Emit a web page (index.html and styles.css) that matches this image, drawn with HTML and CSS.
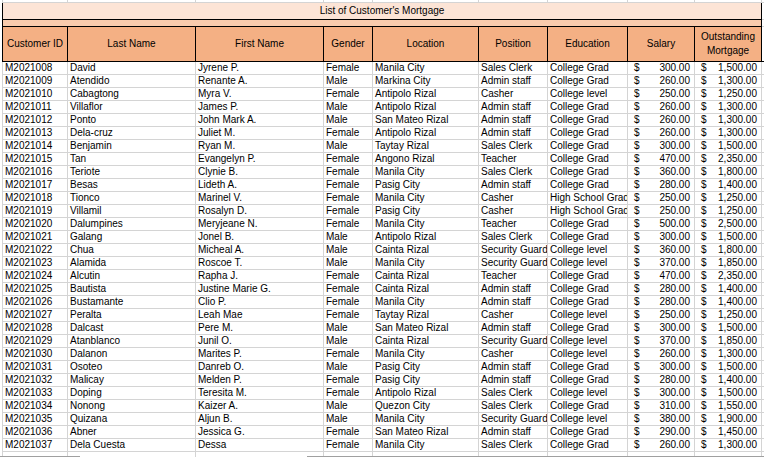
FILE: index.html
```html
<!DOCTYPE html>
<html>
<head>
<meta charset="utf-8">
<link rel="stylesheet" href="styles.css">
</head>
<body>
<div class="sheet">
  <div class="row top"><div class="c"></div><div class="c"></div><div class="c"></div><div class="c"></div><div class="c"></div><div class="c"></div><div class="c"></div><div class="c"></div><div class="c"></div><div class="c"></div></div>
  <div class="row title"><div class="c merged">List of Customer's Mortgage</div><div class="c"></div></div>
  <div class="row band"><div class="c merged"></div><div class="c"></div></div>
  <div class="row head">
    <div class="c">Customer ID</div><div class="c">Last Name</div><div class="c">First Name</div><div class="c">Gender</div><div class="c">Location</div><div class="c">Position</div><div class="c">Education</div><div class="c">Salary</div><div class="c">Outstanding Mortgage</div><div class="c x"></div>
  </div>
  <div class="row"><div class="c">M2021008</div><div class="c">David</div><div class="c">Jyrene P.</div><div class="c">Female</div><div class="c">Manila City</div><div class="c">Sales Clerk</div><div class="c">College Grad</div><div class="c m"><span>$</span><span>300.00</span></div><div class="c m"><span>$</span><span>1,500.00</span></div><div class="c"></div></div>
  <div class="row"><div class="c">M2021009</div><div class="c">Atendido</div><div class="c">Renante A.</div><div class="c">Male</div><div class="c">Markina City</div><div class="c">Admin staff</div><div class="c">College Grad</div><div class="c m"><span>$</span><span>260.00</span></div><div class="c m"><span>$</span><span>1,300.00</span></div><div class="c"></div></div>
  <div class="row"><div class="c">M2021010</div><div class="c">Cabagtong</div><div class="c">Myra V.</div><div class="c">Female</div><div class="c">Antipolo Rizal</div><div class="c">Casher</div><div class="c">College level</div><div class="c m"><span>$</span><span>250.00</span></div><div class="c m"><span>$</span><span>1,250.00</span></div><div class="c"></div></div>
  <div class="row"><div class="c">M2021011</div><div class="c">Villaflor</div><div class="c">James P.</div><div class="c">Male</div><div class="c">Antipolo Rizal</div><div class="c">Admin staff</div><div class="c">College Grad</div><div class="c m"><span>$</span><span>260.00</span></div><div class="c m"><span>$</span><span>1,300.00</span></div><div class="c"></div></div>
  <div class="row"><div class="c">M2021012</div><div class="c">Ponto</div><div class="c">John Mark A.</div><div class="c">Male</div><div class="c">San Mateo Rizal</div><div class="c">Admin staff</div><div class="c">College Grad</div><div class="c m"><span>$</span><span>260.00</span></div><div class="c m"><span>$</span><span>1,300.00</span></div><div class="c"></div></div>
  <div class="row"><div class="c">M2021013</div><div class="c">Dela-cruz</div><div class="c">Juliet M.</div><div class="c">Female</div><div class="c">Antipolo Rizal</div><div class="c">Admin staff</div><div class="c">College Grad</div><div class="c m"><span>$</span><span>260.00</span></div><div class="c m"><span>$</span><span>1,300.00</span></div><div class="c"></div></div>
  <div class="row"><div class="c">M2021014</div><div class="c">Benjamin</div><div class="c">Ryan M.</div><div class="c">Male</div><div class="c">Taytay Rizal</div><div class="c">Sales Clerk</div><div class="c">College Grad</div><div class="c m"><span>$</span><span>300.00</span></div><div class="c m"><span>$</span><span>1,500.00</span></div><div class="c"></div></div>
  <div class="row"><div class="c">M2021015</div><div class="c">Tan</div><div class="c">Evangelyn P.</div><div class="c">Female</div><div class="c">Angono Rizal</div><div class="c">Teacher</div><div class="c">College Grad</div><div class="c m"><span>$</span><span>470.00</span></div><div class="c m"><span>$</span><span>2,350.00</span></div><div class="c"></div></div>
  <div class="row"><div class="c">M2021016</div><div class="c">Teriote</div><div class="c">Clynie B.</div><div class="c">Female</div><div class="c">Manila City</div><div class="c">Sales Clerk</div><div class="c">College Grad</div><div class="c m"><span>$</span><span>360.00</span></div><div class="c m"><span>$</span><span>1,800.00</span></div><div class="c"></div></div>
  <div class="row"><div class="c">M2021017</div><div class="c">Besas</div><div class="c">Lideth A.</div><div class="c">Female</div><div class="c">Pasig City</div><div class="c">Admin staff</div><div class="c">College Grad</div><div class="c m"><span>$</span><span>280.00</span></div><div class="c m"><span>$</span><span>1,400.00</span></div><div class="c"></div></div>
  <div class="row"><div class="c">M2021018</div><div class="c">Tionco</div><div class="c">Marinel V.</div><div class="c">Female</div><div class="c">Manila City</div><div class="c">Casher</div><div class="c">High School Grad</div><div class="c m"><span>$</span><span>250.00</span></div><div class="c m"><span>$</span><span>1,250.00</span></div><div class="c"></div></div>
  <div class="row"><div class="c">M2021019</div><div class="c">Villamil</div><div class="c">Rosalyn D.</div><div class="c">Female</div><div class="c">Pasig City</div><div class="c">Casher</div><div class="c">High School Grad</div><div class="c m"><span>$</span><span>250.00</span></div><div class="c m"><span>$</span><span>1,250.00</span></div><div class="c"></div></div>
  <div class="row"><div class="c">M2021020</div><div class="c">Dalumpines</div><div class="c">Meryjeane N.</div><div class="c">Female</div><div class="c">Manila City</div><div class="c">Teacher</div><div class="c">College Grad</div><div class="c m"><span>$</span><span>500.00</span></div><div class="c m"><span>$</span><span>2,500.00</span></div><div class="c"></div></div>
  <div class="row"><div class="c">M2021021</div><div class="c">Galang</div><div class="c">Jonel B.</div><div class="c">Male</div><div class="c">Antipolo Rizal</div><div class="c">Sales Clerk</div><div class="c">College Grad</div><div class="c m"><span>$</span><span>300.00</span></div><div class="c m"><span>$</span><span>1,500.00</span></div><div class="c"></div></div>
  <div class="row"><div class="c">M2021022</div><div class="c">Chua</div><div class="c">Micheal A.</div><div class="c">Male</div><div class="c">Cainta Rizal</div><div class="c">Security Guard</div><div class="c">College level</div><div class="c m"><span>$</span><span>360.00</span></div><div class="c m"><span>$</span><span>1,800.00</span></div><div class="c"></div></div>
  <div class="row"><div class="c">M2021023</div><div class="c">Alamida</div><div class="c">Roscoe T.</div><div class="c">Male</div><div class="c">Manila City</div><div class="c">Security Guard</div><div class="c">College level</div><div class="c m"><span>$</span><span>370.00</span></div><div class="c m"><span>$</span><span>1,850.00</span></div><div class="c"></div></div>
  <div class="row"><div class="c">M2021024</div><div class="c">Alcutin</div><div class="c">Rapha J.</div><div class="c">Female</div><div class="c">Cainta Rizal</div><div class="c">Teacher</div><div class="c">College Grad</div><div class="c m"><span>$</span><span>470.00</span></div><div class="c m"><span>$</span><span>2,350.00</span></div><div class="c"></div></div>
  <div class="row"><div class="c">M2021025</div><div class="c">Bautista</div><div class="c">Justine Marie G.</div><div class="c">Female</div><div class="c">Cainta Rizal</div><div class="c">Admin staff</div><div class="c">College Grad</div><div class="c m"><span>$</span><span>280.00</span></div><div class="c m"><span>$</span><span>1,400.00</span></div><div class="c"></div></div>
  <div class="row"><div class="c">M2021026</div><div class="c">Bustamante</div><div class="c">Clio P.</div><div class="c">Female</div><div class="c">Manila City</div><div class="c">Admin staff</div><div class="c">College Grad</div><div class="c m"><span>$</span><span>280.00</span></div><div class="c m"><span>$</span><span>1,400.00</span></div><div class="c"></div></div>
  <div class="row"><div class="c">M2021027</div><div class="c">Peralta</div><div class="c">Leah Mae</div><div class="c">Female</div><div class="c">Taytay Rizal</div><div class="c">Casher</div><div class="c">College level</div><div class="c m"><span>$</span><span>250.00</span></div><div class="c m"><span>$</span><span>1,250.00</span></div><div class="c"></div></div>
  <div class="row"><div class="c">M2021028</div><div class="c">Dalcast</div><div class="c">Pere M.</div><div class="c">Male</div><div class="c">San Mateo Rizal</div><div class="c">Admin staff</div><div class="c">College Grad</div><div class="c m"><span>$</span><span>300.00</span></div><div class="c m"><span>$</span><span>1,500.00</span></div><div class="c"></div></div>
  <div class="row"><div class="c">M2021029</div><div class="c">Atanblanco</div><div class="c">Junil O.</div><div class="c">Male</div><div class="c">Cainta Rizal</div><div class="c">Security Guard</div><div class="c">College level</div><div class="c m"><span>$</span><span>370.00</span></div><div class="c m"><span>$</span><span>1,850.00</span></div><div class="c"></div></div>
  <div class="row"><div class="c">M2021030</div><div class="c">Dalanon</div><div class="c">Marites P.</div><div class="c">Female</div><div class="c">Manila City</div><div class="c">Casher</div><div class="c">College level</div><div class="c m"><span>$</span><span>260.00</span></div><div class="c m"><span>$</span><span>1,300.00</span></div><div class="c"></div></div>
  <div class="row"><div class="c">M2021031</div><div class="c">Osoteo</div><div class="c">Danreb O.</div><div class="c">Male</div><div class="c">Pasig City</div><div class="c">Admin staff</div><div class="c">College Grad</div><div class="c m"><span>$</span><span>300.00</span></div><div class="c m"><span>$</span><span>1,500.00</span></div><div class="c"></div></div>
  <div class="row"><div class="c">M2021032</div><div class="c">Malicay</div><div class="c">Melden P.</div><div class="c">Female</div><div class="c">Pasig City</div><div class="c">Admin staff</div><div class="c">College Grad</div><div class="c m"><span>$</span><span>280.00</span></div><div class="c m"><span>$</span><span>1,400.00</span></div><div class="c"></div></div>
  <div class="row"><div class="c">M2021033</div><div class="c">Doping</div><div class="c">Teresita M.</div><div class="c">Female</div><div class="c">Antipolo Rizal</div><div class="c">Sales Clerk</div><div class="c">College level</div><div class="c m"><span>$</span><span>300.00</span></div><div class="c m"><span>$</span><span>1,500.00</span></div><div class="c"></div></div>
  <div class="row"><div class="c">M2021034</div><div class="c">Nonong</div><div class="c">Kaizer A.</div><div class="c">Male</div><div class="c">Quezon City</div><div class="c">Sales Clerk</div><div class="c">College Grad</div><div class="c m"><span>$</span><span>310.00</span></div><div class="c m"><span>$</span><span>1,550.00</span></div><div class="c"></div></div>
  <div class="row"><div class="c">M2021035</div><div class="c">Quizana</div><div class="c">Aljun B.</div><div class="c">Male</div><div class="c">Manila City</div><div class="c">Security Guard</div><div class="c">College level</div><div class="c m"><span>$</span><span>380.00</span></div><div class="c m"><span>$</span><span>1,900.00</span></div><div class="c"></div></div>
  <div class="row"><div class="c">M2021036</div><div class="c">Abner</div><div class="c">Jessica G.</div><div class="c">Female</div><div class="c">San Mateo Rizal</div><div class="c">Admin staff</div><div class="c">College Grad</div><div class="c m"><span>$</span><span>290.00</span></div><div class="c m"><span>$</span><span>1,450.00</span></div><div class="c"></div></div>
  <div class="row"><div class="c">M2021037</div><div class="c">Dela Cuesta</div><div class="c">Dessa</div><div class="c">Female</div><div class="c">Manila City</div><div class="c">Sales Clerk</div><div class="c">College Grad</div><div class="c m"><span>$</span><span>260.00</span></div><div class="c m"><span>$</span><span>1,300.00</span></div><div class="c"></div></div>
  <div class="row"><div class="c"></div><div class="c"></div><div class="c"></div><div class="c"></div><div class="c"></div><div class="c"></div><div class="c"></div><div class="c"></div><div class="c"></div><div class="c"></div></div>
</div>
<div class="edge"><div class="seg left"></div><div class="gap"></div><div class="seg right"></div></div>
</body>
</html>
```

FILE: styles.css
```css
html, body {
  margin: 0;
  padding: 0;
  background: #ffffff;
  overflow: hidden;
  height: 457px;
}

.sheet {
  margin-left: 2px;
  font-family: "Liberation Sans", Arial, sans-serif;
  font-size: 10px;
  color: #000;
}

.row {
  display: grid;
  grid-template-columns: 66px 128px 128px 49px 106px 69px 80px 67px 67px 1fr;
  height: 13px;
}

.c {
  box-sizing: border-box;
  border-right: 1px solid #d4d4d4;
  border-bottom: 1px solid #d4d4d4;
  padding-left: 2px;
  line-height: 12px;
  white-space: nowrap;
  overflow: hidden;
}

.row > .c:first-child {
  border-left: 1px solid #d4d4d4;
}

.row.top {
  height: 3px;
}

.merged {
  grid-column: 1 / span 9;
  border-right-color: #000;
  border-bottom-color: #000;
}

.row.title > .c:first-child,
.row.band > .c:first-child,
.row.head > .c:first-child {
  border-left-color: #000;
}

.row.title {
  height: 17px;
}

.row.title .merged {
  background: #fce4d6;
  text-align: center;
  line-height: 16px;
  padding-left: 0;
}

.row.band {
  height: 7px;
}

.row.band .merged {
  background: #f8cbad;
}

.row.head {
  height: 35px;
}

.row.head .c {
  background: #f4b084;
  border-right-color: #000;
  border-bottom-color: #000;
  display: flex;
  align-items: center;
  justify-content: center;
  text-align: center;
  white-space: normal;
  line-height: 14px;
  padding: 0 1px;
}

.row.head .c.x {
  background: #fff;
  border-right-color: #d4d4d4;
  border-bottom-color: #000;
}

.c.m {
  display: flex;
  justify-content: space-between;
  padding-left: 6px;
  padding-right: 4px;
}

.edge {
  position: absolute;
  left: 0;
  right: 0;
  top: 456px;
  height: 1px;
  display: flex;
}

.seg {
  background: #a0a0a0;
  height: 1px;
}

.seg.left {
  width: 80px;
}

.gap {
  width: 227px;
}

.seg.right {
  flex: 1;
}
```
